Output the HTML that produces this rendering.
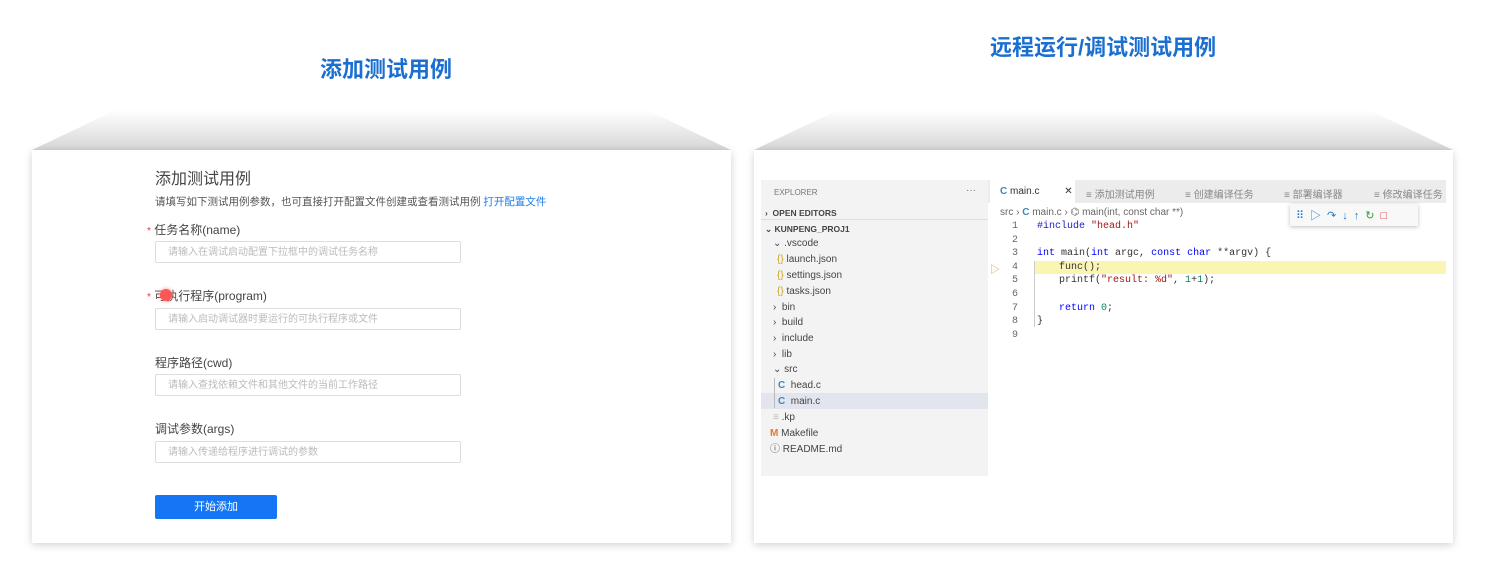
<!DOCTYPE html>
<html><head><meta charset="utf-8"><style>
*{margin:0;padding:0;box-sizing:border-box}
body{width:1490px;height:567px;background:#fff;position:relative;overflow:hidden;font-family:"Liberation Sans","Noto Sans CJK SC",sans-serif;color:#333}
.a{position:absolute;white-space:nowrap}
.title{font-size:22px;font-weight:bold;color:#1a6fd0}
.card{position:absolute;top:150px;width:699px;height:393px;background:#fff;box-shadow:0 2px 8px rgba(0,0,0,.18)}
.trap{position:absolute;top:110px;height:40px;width:699px;background:linear-gradient(#fff,#d6d6d6);clip-path:polygon(12% 0,88% 0,100% 100%,0 100%)}
.lbl{font-size:12px;color:#444}
.inp{position:absolute;width:306px;height:22px;border:1px solid #ddd;border-radius:2px;font-size:10px;color:#bbb;padding:5px 12px 0;line-height:12px;white-space:nowrap}
.req{color:#e33;font-size:10px}
.side{position:absolute;left:761px;top:180px;width:227px;height:296px;background:#f3f3f3}
.fi{font-size:10px;color:#444;position:absolute;white-space:nowrap;line-height:12px}
.mono{font-family:"Liberation Mono",monospace;font-size:10px;position:absolute;white-space:nowrap;color:#333}
.ln{font-family:"Liberation Mono",monospace;font-size:10px;color:#666;position:absolute;width:12px;text-align:right}
.tab{position:absolute;top:180px;height:23px;font-size:10px;color:#888;padding:6px 0;background:#ececec}
</style></head><body>
<div class="a title" style="left:320px;top:52px">添加测试用例</div>
<div class="a title" style="left:990px;top:30px">远程运行/调试测试用例</div>
<div class="trap" style="left:32px"></div>
<div class="trap" style="left:754px"></div>
<div class="card" style="left:32px"></div>
<div class="card" style="left:754px"></div>

<div class="a" style="left:155px;top:165px;font-size:16px;color:#444">添加测试用例</div>
<div class="a" style="left:155px;top:194px;font-size:10.5px;color:#555">请填写如下测试用例参数，也可直接打开配置文件创建或查看测试用例 <span style="color:#1e7ce8">打开配置文件</span></div>
<div class="a lbl" style="left:147px;top:221px"><span class="req">*</span> 任务名称(name)</div>
<div class="inp" style="left:155px;top:241px">请输入在调试启动配置下拉框中的调试任务名称</div>
<div class="a lbl" style="left:147px;top:287px"><span class="req">*</span> 可执行程序(program)</div>
<div class="a" style="left:160px;top:289px;width:12px;height:12px;border-radius:50%;background:#f55;box-shadow:0 0 4px #f88"></div>
<div class="inp" style="left:155px;top:308px">请输入启动调试器时要运行的可执行程序或文件</div>
<div class="a lbl" style="left:155px;top:354px">程序路径(cwd)</div>
<div class="inp" style="left:155px;top:374px">请输入查找依赖文件和其他文件的当前工作路径</div>
<div class="a lbl" style="left:155px;top:420px">调试参数(args)</div>
<div class="inp" style="left:155px;top:441px">请输入传递给程序进行调试的参数</div>
<div class="a" style="left:155px;top:495px;width:122px;height:24px;background:#1476f5;border-radius:2px;color:#fff;font-size:11px;text-align:center;line-height:24px">开始添加</div>

<div class="side"></div>
<div class="fi" style="left:774px;top:187px;font-size:8px;color:#777">EXPLORER</div>
<div class="fi" style="left:966px;top:185px;color:#777">···</div>
<div class="fi" style="left:765px;top:207px;font-size:8.5px;font-weight:bold">›&nbsp; OPEN EDITORS</div>
<div class="a" style="left:761px;top:219px;width:227px;border-top:1px solid #ddd"></div>
<div class="fi" style="left:765px;top:223px;font-size:8.5px;font-weight:bold">⌄ KUNPENG_PROJ1</div>
<div class="fi" style="left:773px;top:238px">⌄ .vscode</div>
<div class="fi" style="left:777px;top:254px"><span style="color:#c9a227">{}</span> launch.json</div>
<div class="fi" style="left:777px;top:270px"><span style="color:#c9a227">{}</span> settings.json</div>
<div class="fi" style="left:777px;top:286px"><span style="color:#c9a227">{}</span> tasks.json</div>
<div class="fi" style="left:773px;top:302px">›&nbsp; bin</div>
<div class="fi" style="left:773px;top:317px">›&nbsp; build</div>
<div class="fi" style="left:773px;top:333px">›&nbsp; include</div>
<div class="fi" style="left:773px;top:349px">›&nbsp; lib</div>
<div class="fi" style="left:773px;top:364px">⌄ src</div>
<div class="a" style="left:761px;top:393px;width:227px;height:16px;background:#e2e5ee"></div>
<div class="a" style="left:774px;top:378px;height:30px;border-left:1px solid #bbb"></div>
<div class="fi" style="left:778px;top:380px"><b style="color:#3a8ab8">C</b>&nbsp; head.c</div>
<div class="fi" style="left:778px;top:396px"><b style="color:#3a8ab8">C</b>&nbsp; main.c</div>
<div class="fi" style="left:773px;top:412px"><span style="color:#bbb">≡</span> .kp</div>
<div class="fi" style="left:770px;top:428px"><b style="color:#e37933">M</b> Makefile</div>
<div class="fi" style="left:770px;top:444px"><span style="color:#555">ⓘ</span> README.md</div>

<div class="a" style="left:988px;top:180px;width:458px;height:23px;background:#ececec"></div>
<div class="tab" style="left:990px;width:85px;background:#fff;color:#333;padding-left:10px"><b style="color:#3a8ab8">C</b> main.c <span style="margin-left:22px">✕</span></div>
<div class="tab" style="left:1086px">≡ 添加测试用例</div>
<div class="tab" style="left:1185px">≡ 创建编译任务</div>
<div class="tab" style="left:1284px">≡ 部署编译器</div>
<div class="tab" style="left:1374px">≡ 修改编译任务</div>
<div class="fi" style="left:1000px;top:207px;color:#666">src › <b style="color:#3a8ab8">C</b> main.c › ⌬ main(int, const char **)</div>
<div class="a" style="left:1290px;top:204px;width:128px;height:22px;background:#f8f8f8;box-shadow:0 1px 4px rgba(0,0,0,.25);font-size:11px;color:#1a7ad4;padding:3px 6px;letter-spacing:6px">⠿▷↷↓↑<span style="color:#3a9a3a">↻</span><span style="color:#d33">□</span></div>
<div class="a" style="left:1034px;top:261px;width:412px;height:13px;background:#fbf5b4"></div>
<div class="a" style="left:1034px;top:261px;height:66px;border-left:1px solid #ccc"></div>
<div class="a" style="left:990px;top:261px;font-size:10px;color:#d4a017">▷</div>
<div class="ln" style="left:1006px;top:221px">1</div><div class="ln" style="left:1006px;top:235px">2</div>
<div class="ln" style="left:1006px;top:248px">3</div><div class="ln" style="left:1006px;top:262px">4</div>
<div class="ln" style="left:1006px;top:275px">5</div><div class="ln" style="left:1006px;top:289px">6</div>
<div class="ln" style="left:1006px;top:303px">7</div><div class="ln" style="left:1006px;top:316px">8</div>
<div class="ln" style="left:1006px;top:330px">9</div>
<div class="mono" style="left:1037px;top:221px"><span style="color:#2020c0">#include</span> <span style="color:#a31515">"head.h"</span></div>
<div class="mono" style="left:1037px;top:248px"><span style="color:#0000ff">int</span> main(<span style="color:#0000ff">int</span> argc, <span style="color:#0000ff">const char</span> **argv) {</div>
<div class="mono" style="left:1059px;top:262px">func();</div>
<div class="mono" style="left:1059px;top:275px">printf(<span style="color:#a31515">"result: %d"</span>, <span style="color:#098658">1</span>+<span style="color:#098658">1</span>);</div>
<div class="mono" style="left:1059px;top:303px"><span style="color:#0000ff">return</span> <span style="color:#098658">0</span>;</div>
<div class="mono" style="left:1037px;top:316px">}</div>
</body></html>
